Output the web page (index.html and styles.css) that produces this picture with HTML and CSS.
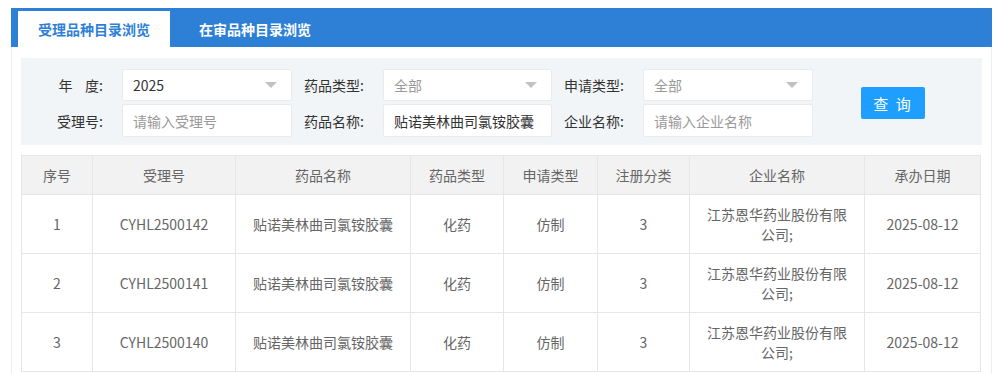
FILE: index.html
```html
<!DOCTYPE html>
<html lang="zh-CN">
<head>
  <meta charset="UTF-8">
  <title>受理品种目录浏览</title>
  <link rel="stylesheet" href="styles.css">
</head>
<body>
  <div class="box">
    <div class="tabs">
      <div class="tab active">受理品种目录浏览</div>
      <div class="tab">在审品种目录浏览</div>
    </div>
    <div class="content">
      <form class="filter">
        <label>年&nbsp;&nbsp;&nbsp;&nbsp;度:</label>
        <div class="select"><span>2025</span><i class="arrow"></i></div>
        <label>药品类型:</label>
        <div class="select"><span class="muted">全部</span><i class="arrow"></i></div>
        <label>申请类型:</label>
        <div class="select"><span class="muted">全部</span><i class="arrow"></i></div>
        <div class="btn-cell"><button type="button" class="btn">查 询</button></div>

        <label>受理号:</label>
        <input type="text" placeholder="请输入受理号">
        <label>药品名称:</label>
        <input type="text" value="贴诺美林曲司氯铵胶囊">
        <label>企业名称:</label>
        <input type="text" placeholder="请输入企业名称">
      </form>

      <table class="list">
        <colgroup>
          <col style="width:71px"><col style="width:143px"><col style="width:175px"><col style="width:93px">
          <col style="width:94px"><col style="width:92px"><col style="width:175px"><col style="width:116px">
        </colgroup>
        <thead>
          <tr>
            <th>序号</th><th>受理号</th><th>药品名称</th><th>药品类型</th>
            <th>申请类型</th><th>注册分类</th><th>企业名称</th><th>承办日期</th>
          </tr>
        </thead>
        <tbody>
          <tr>
            <td>1</td><td>CYHL2500142</td><td>贴诺美林曲司氯铵胶囊</td><td>化药</td>
            <td>仿制</td><td>3</td><td>江苏恩华药业股份有限公司;</td><td>2025-08-12</td>
          </tr>
          <tr>
            <td>2</td><td>CYHL2500141</td><td>贴诺美林曲司氯铵胶囊</td><td>化药</td>
            <td>仿制</td><td>3</td><td>江苏恩华药业股份有限公司;</td><td>2025-08-12</td>
          </tr>
          <tr>
            <td>3</td><td>CYHL2500140</td><td>贴诺美林曲司氯铵胶囊</td><td>化药</td>
            <td>仿制</td><td>3</td><td>江苏恩华药业股份有限公司;</td><td>2025-08-12</td>
          </tr>
        </tbody>
      </table>
    </div>
  </div>
</body>
</html>
```
FILE: styles.css
```css
body {
  margin: 8px 9px 0 11px;
  font-family: "Noto Sans CJK SC", "Liberation Sans", sans-serif;
  font-size: 14px;
  color: #333;
  background: #fff;
  overflow: hidden;
}
.box {
  border-left: 1px solid #e8eef1;
  border-right: 1px solid #e8eef1;
  min-height: 400px;
}
.tabs {
  display: flex;
  background-color: #2d80d6;
  height: 39px;
  padding: 3px 0 0 7px;
  box-sizing: border-box;
  margin: 0 -1px;
}
.tab {
  height: 36px;
  line-height: 36px;
  color: #fff;
  font-weight: bold;
  padding: 0 29px;
}
.tab.active {
  background: #fff;
  color: #2d80d6;
  padding: 0 20px;
}
.content {
  padding: 11px 9px 0 9px;
}
.filter {
  display: grid;
  grid-template-columns: 91px 170px 91px 169px 91px 170px auto;
  grid-template-rows: 32px 33px;
  row-gap: 3px;
  align-items: center;
  background: #f2f5f7;
  padding: 11px 0 8px 10px;
  margin: 0;
}
.filter label {
  text-align: right;
  padding-right: 19px;
  line-height: 20px;
}
.select, .filter input {
  height: 100%;
  box-sizing: border-box;
  background: #fff;
  border: 1px solid #e9ecee;
  border-radius: 2px;
  font: inherit;
  color: #333;
}
.select {
  display: flex;
  align-items: center;
  justify-content: space-between;
  padding: 0 14px 0 10px;
}
.filter input {
  width: 100%;
  padding: 0 10px;
  outline: none;
}
.filter input::placeholder, .muted {
  color: #999;
}
.arrow {
  width: 0;
  height: 0;
  border-left: 6px solid transparent;
  border-right: 6px solid transparent;
  border-top: 6px solid #c2c2c2;
}
.btn-cell {
  grid-column: 7;
  grid-row: 1 / span 2;
  padding-left: 48px;
}
.btn {
  width: 64px;
  height: 32px;
  background-color: #1e9fff;
  color: #fff;
  border: none;
  border-radius: 2px;
  font-family: inherit;
  font-size: 15px;
  letter-spacing: 2px;
  cursor: pointer;
}
.list {
  width: 959px;
  table-layout: fixed;
  border-collapse: collapse;
  margin-top: 10px;
  color: #666;
}
.list th, .list td {
  border: 1px solid #e6e6e6;
  padding: 9px 15px;
  line-height: 20px;
  text-align: center;
  font-weight: normal;
}
.list th {
  background-color: #f2f2f2;
}
```
